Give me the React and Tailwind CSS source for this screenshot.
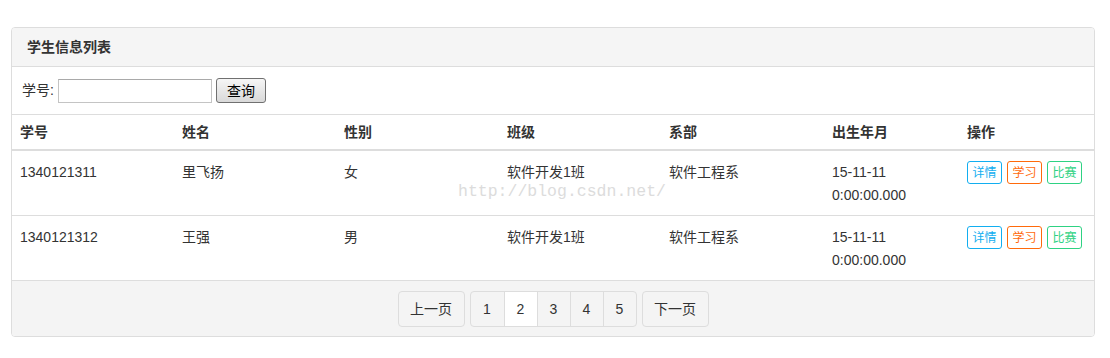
import React from 'react';

const cols = ['学号', '姓名', '性别', '班级', '系部', '出生年月', '操作'];
const widths = ['w-[162px]', 'w-[162px]', 'w-[163px]', 'w-[162px]', 'w-[163px]', 'w-[135px]', ''];

const rows = [
  { id: '1340121311', name: '里飞扬', sex: '女', cls: '软件开发1班', dept: '软件工程系' },
  { id: '1340121312', name: '王强', sex: '男', cls: '软件开发1班', dept: '软件工程系' },
];

const font = { fontFamily: '"Liberation Sans", "Noto Sans CJK SC", sans-serif' };

const Tag = ({ text, cls }) => (
  <span className={`inline-flex items-center justify-center w-[35px] h-[23px] border rounded-[3px] text-[12px] leading-none ${cls}`}>
    {text}
  </span>
);

export default function App() {
  return (
    <div className="bg-white w-[1110px] h-[358px] pt-[27px] pl-[11px] text-[#333]" style={font}>
      <div className="relative w-[1084px] border border-[#ddd] rounded-[4px] overflow-hidden">
        <div className="h-[39px] bg-[#f5f5f5] border-b border-[#ddd] flex items-center pl-[15px] text-[14px] font-bold leading-none">
          学生信息列表
        </div>

        <div className="h-[48px] flex items-center pl-[10px] text-[14px] border-b border-[#ddd]">
          <span>学号:</span>
          <input className="ml-[4px] w-[154px] h-[24px] border border-[#c4c4c4] border-t-[#a9a9a9] bg-white outline-none" />
          <button className="ml-[4px] w-[50px] h-[25px] border border-[#707070] rounded-[3px] bg-gradient-to-b from-[#f6f6f6] to-[#d9d9d9] text-[14px] text-black leading-none">
            查询
          </button>
        </div>

        <div className="flex h-[36px] items-center border-b-2 border-[#ddd] text-[14px] font-bold">
          {cols.map((c, i) => (
            <div key={c} className={`${widths[i]} pl-[8px] shrink-0`}>{c}</div>
          ))}
        </div>

        {rows.map((r, idx) => (
          <div key={r.id} className={`flex ${idx > 0 ? 'h-[65px] border-t border-[#ddd]' : 'h-[64px]'} text-[14px] leading-[23px] pt-[10px]`}>
            <div className="w-[162px] pl-[8px] shrink-0">{r.id}</div>
            <div className="w-[162px] pl-[8px] shrink-0">{r.name}</div>
            <div className="w-[163px] pl-[8px] shrink-0">{r.sex}</div>
            <div className="w-[162px] pl-[8px] shrink-0">{r.cls}</div>
            <div className="w-[163px] pl-[8px] shrink-0">{r.dept}</div>
            <div className="w-[135px] pl-[8px] shrink-0">
              <div>15-11-11</div>
              <div>0:00:00.000</div>
            </div>
            <div className="pl-[8px] flex gap-[5px] items-start">
              <Tag text="详情" cls="border-[#12aef0] text-[#12aef0]" />
              <Tag text="学习" cls="border-[#ff6a0b] text-[#ff6a0b]" />
              <Tag text="比赛" cls="border-[#2ed283] text-[#2ed283]" />
            </div>
          </div>
        ))}

        <div className="h-[56px] bg-[#f4f4f4] border-t border-[#ddd] flex justify-center pt-[10px] text-[14px]">
          <div className="flex gap-[5px] h-[36px]">
            <button className="w-[67px] border border-[#ddd] rounded-[4px] leading-none">上一页</button>
            <div className="flex border border-[#ddd] rounded-[4px] overflow-hidden">
              {[1, 2, 3, 4, 5].map((n) => (
                <span
                  key={n}
                  className={`w-[33px] flex items-center justify-center ${n > 1 ? 'border-l border-[#ddd]' : ''} ${n === 2 ? 'bg-white' : ''}`}
                >
                  {n}
                </span>
              ))}
            </div>
            <button className="w-[67px] border border-[#ddd] rounded-[4px] leading-none">下一页</button>
          </div>
        </div>

        <div
          className="absolute left-[446px] top-[152px] text-[16.5px] text-[#dcdcdc] pointer-events-none"
          style={{ fontFamily: '"Liberation Mono", monospace' }}
        >
          http://blog.csdn.net/
        </div>
      </div>
    </div>
  );
}
